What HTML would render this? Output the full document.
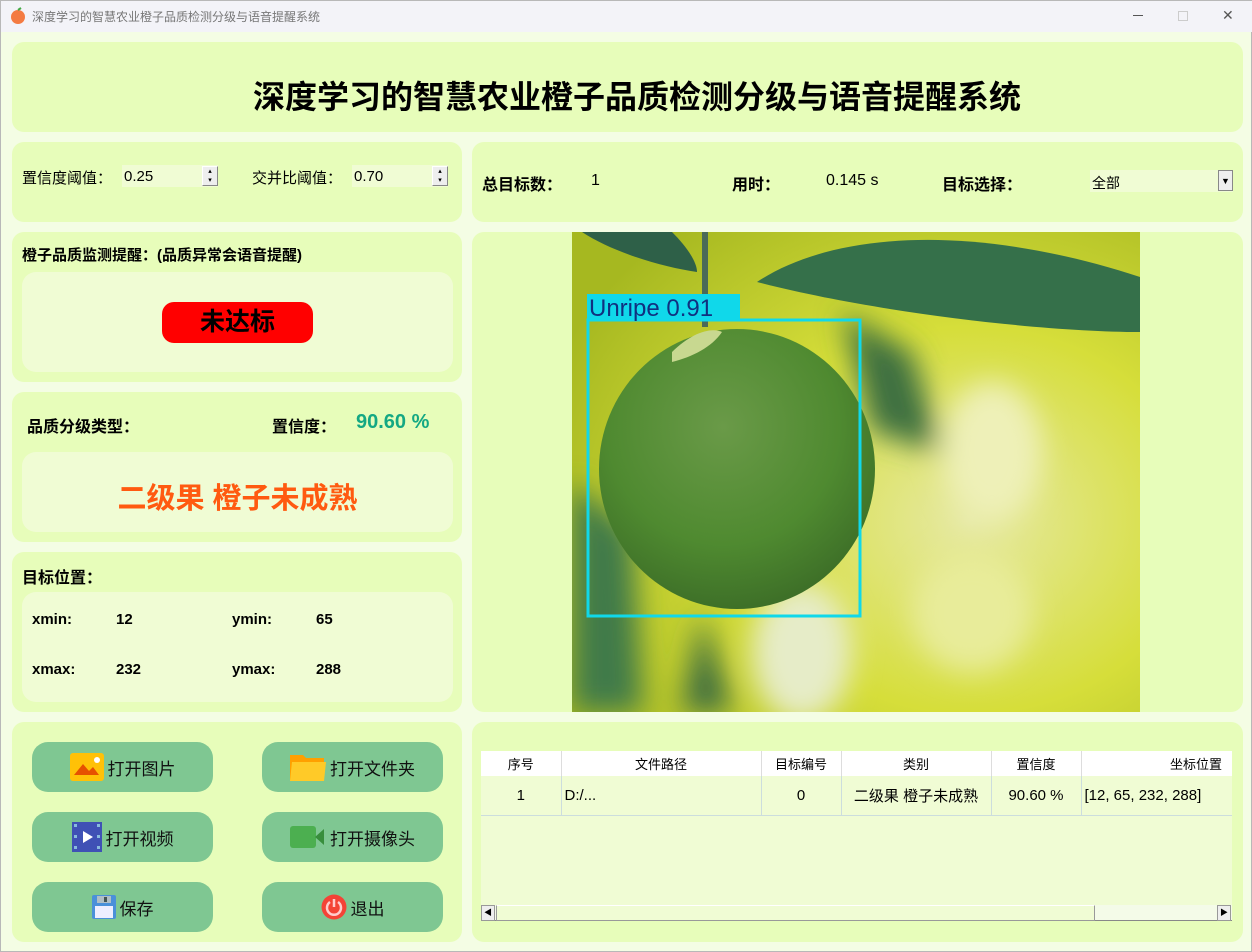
<!DOCTYPE html>
<html><head><meta charset="utf-8"><style>
*{margin:0;padding:0;box-sizing:border-box}
body{width:1252px;height:952px;background:#f4fde4;font-family:"Liberation Sans","Noto Sans CJK SC",sans-serif;position:relative;overflow:hidden;border:1px solid #b8b8b8}
.a{position:absolute}
.p{position:absolute;background:#e7fdba;border-radius:12px}
.in{position:absolute;background:#f0fcd4;border-radius:14px}
.b{font-weight:bold}
.btn{position:absolute;width:181px;height:50px;background:#7fc792;border-radius:16px;display:flex;align-items:center;justify-content:center;font-size:17px;color:#111}
.btn svg{margin-right:4px}
.spin{position:absolute;width:96px;height:22px;background:#f0fcd4;font-size:15px;padding:3px 0 0 2px}
.spin i{position:absolute;right:0;top:1px;width:16px;height:20px;border:1px solid #888;background:#eee;border-top-color:#fff;border-left-color:#fff;font-style:normal;font-size:7px;line-height:9px;text-align:center}
table{border-collapse:collapse;font-size:13px}
td{text-align:center}
</style></head><body>
<div class="a" style="left:0;top:0;width:1252px;height:31px;background:#f3f3f8"></div>
<svg class="a" style="left:9px;top:6px" width="16" height="18"><circle cx="8" cy="10" r="7" fill="#f47b42"/><path d="M8 3 L11 1" stroke="#4a4" stroke-width="2"/></svg>
<div class="a" style="left:31px;top:7px;font-size:12px;color:#777">深度学习的智慧农业橙子品质检测分级与语音提醒系统</div>
<div class="a" style="left:1132px;top:14px;width:10px;height:1px;background:#555"></div>
<div class="a" style="left:1177px;top:10px;width:10px;height:10px;border:1px solid #ccc"></div>
<div class="a" style="left:1221px;top:6px;font-size:14px;color:#555">✕</div>

<div class="p" style="left:11px;top:41px;width:1231px;height:90px"></div>
<div class="a b" style="left:0;width:1272px;top:71px;text-align:center;font-size:32px;color:#000">深度学习的智慧农业橙子品质检测分级与语音提醒系统</div>

<div class="p" style="left:11px;top:141px;width:450px;height:80px"></div>
<div class="a" style="left:21px;top:166px;font-size:15px">置信度阈值：</div>
<div class="spin" style="left:121px;top:164px">0.25<i>▴<br>▾</i></div>
<div class="a" style="left:251px;top:166px;font-size:15px">交并比阈值：</div>
<div class="spin" style="left:351px;top:164px">0.70<i>▴<br>▾</i></div>

<div class="p" style="left:471px;top:141px;width:771px;height:80px"></div>
<div class="a b" style="left:481px;top:170px;font-size:16px">总目标数：</div>
<div class="a" style="left:590px;top:171px;font-size:16px">1</div>
<div class="a b" style="left:731px;top:170px;font-size:16px">用时：</div>
<div class="a" style="left:825px;top:171px;font-size:16px">0.145 s</div>
<div class="a b" style="left:941px;top:170px;font-size:16px">目标选择：</div>
<div class="a" style="left:1089px;top:169px;width:143px;height:22px;background:#f0fcd4;font-size:14px;padding:3px 2px">全部<span style="position:absolute;right:0;top:0;width:15px;height:21px;border:1px solid #888;background:#eee;font-size:9px;text-align:center;line-height:20px">▼</span></div>

<div class="p" style="left:11px;top:231px;width:450px;height:150px"></div>
<div class="a b" style="left:21px;top:243px;font-size:15px">橙子品质监测提醒：(品质异常会语音提醒)</div>
<div class="in" style="left:21px;top:271px;width:431px;height:100px"></div>
<div class="a b" style="left:161px;top:301px;width:151px;height:41px;background:#f00;border-radius:12px;text-align:center;font-size:25px;line-height:41px">未达标</div>

<div class="p" style="left:11px;top:391px;width:450px;height:150px"></div>
<div class="a b" style="left:26px;top:412px;font-size:16px">品质分级类型：</div>
<div class="a b" style="left:271px;top:412px;font-size:16px">置信度：</div>
<div class="a b" style="left:355px;top:410px;font-size:20px;color:#14a883">90.60 %</div>
<div class="in" style="left:21px;top:451px;width:431px;height:80px"></div>
<div class="a b" style="left:21px;width:431px;top:474px;text-align:center;font-size:29px;color:#ff5a10">二级果 橙子未成熟</div>

<div class="p" style="left:11px;top:551px;width:450px;height:160px"></div>
<div class="a b" style="left:21px;top:563px;font-size:16px">目标位置：</div>
<div class="in" style="left:21px;top:591px;width:431px;height:110px"></div>
<div class="a b" style="left:31px;top:610px;font-size:15px">xmin:</div>
<div class="a b" style="left:115px;top:610px;font-size:15px">12</div>
<div class="a b" style="left:231px;top:610px;font-size:15px">ymin:</div>
<div class="a b" style="left:315px;top:610px;font-size:15px">65</div>
<div class="a b" style="left:31px;top:660px;font-size:15px">xmax:</div>
<div class="a b" style="left:115px;top:660px;font-size:15px">232</div>
<div class="a b" style="left:231px;top:660px;font-size:15px">ymax:</div>
<div class="a b" style="left:315px;top:660px;font-size:15px">288</div>

<div class="p" style="left:471px;top:231px;width:771px;height:480px"></div>
<svg class="a" style="left:571px;top:231px" width="568" height="480" viewBox="0 0 568 480">
<defs>
<radialGradient id="bg" cx="0.7" cy="0.6" r="0.8"><stop offset="0" stop-color="#e6e9a4"/><stop offset="0.5" stop-color="#d6de3a"/><stop offset="1" stop-color="#a6b820"/></radialGradient>
<radialGradient id="or" cx="0.45" cy="0.35" r="0.7"><stop offset="0" stop-color="#6a9a48"/><stop offset="0.6" stop-color="#4f8a30"/><stop offset="1" stop-color="#3a6a26"/></radialGradient>
<filter id="bl"><feGaussianBlur stdDeviation="14"/></filter>
</defs>
<rect width="568" height="480" fill="url(#bg)"/>
<g filter="url(#bl)">
<ellipse cx="420" cy="220" rx="50" ry="70" fill="#eef0b8"/>
<ellipse cx="400" cy="380" rx="60" ry="60" fill="#e8ec9a"/>
<ellipse cx="230" cy="420" rx="50" ry="70" fill="#e6ecc8"/>
<path d="M0 250 L60 300 L70 480 L0 480Z" fill="#3f7a4a"/>
<path d="M270 80 L340 120 L370 220 L300 200Z" fill="#3c7040"/>
<path d="M130 380 L160 480 L110 480Z" fill="#3a6a40"/>
</g>
<path d="M185 50 C260 0 400 -10 568 45 L568 100 C470 100 300 80 185 50Z" fill="#35704a"/>
<path d="M10 0 L100 0 C115 15 125 30 125 40 C90 35 40 20 10 0Z" fill="#2e6048"/>
<rect x="130" y="0" width="6" height="95" fill="#4a6a58"/>
<ellipse cx="165" cy="237" rx="138" ry="140" fill="url(#or)"/>
<path d="M100 120 C120 100 140 95 150 100 C140 115 120 125 100 130Z" fill="#c8d890"/>
<rect x="16" y="88" width="272" height="296" fill="none" stroke="#10d8ea" stroke-width="3"/>
<rect x="15" y="62" width="153" height="26" fill="#10d8ea"/>
<text x="17" y="84" font-family="Liberation Sans" font-size="24" fill="#103080">Unripe  0.91</text>
</svg>

<div class="p" style="left:11px;top:721px;width:450px;height:220px"></div>
<div class="btn" style="left:31px;top:741px"><svg width="34" height="28"><rect width="34" height="28" rx="3" fill="#ffc107"/><path d="M4 22 L13 11 L19 18 L23 14 L29 22Z" fill="#e65100"/><circle cx="27" cy="7" r="3" fill="#fff"/></svg>打开图片</div>
<div class="btn" style="left:261px;top:741px"><svg width="36" height="28"><path d="M0 2 h13 l3 3 h18 v23 h-34Z" fill="#ffa000"/><path d="M2 9 h34 l-2 19 h-34Z" fill="#ffca28"/></svg>打开文件夹</div>
<div class="btn" style="left:31px;top:811px"><svg width="30" height="30"><rect width="30" height="30" fill="#3f51b5"/><path d="M11 9 L21 15 L11 21Z" fill="#fff"/><g fill="#8bd" ><rect x="2" y="2" width="3" height="3"/><rect x="2" y="13" width="3" height="3"/><rect x="2" y="24" width="3" height="3"/><rect x="25" y="2" width="3" height="3"/><rect x="25" y="13" width="3" height="3"/><rect x="25" y="24" width="3" height="3"/></g></svg>打开视频</div>
<div class="btn" style="left:261px;top:811px"><svg width="36" height="22"><rect width="26" height="22" rx="3" fill="#4caf50"/><path d="M25 11 L34 3 L34 19Z" fill="#388e3c"/></svg>打开摄像头</div>
<div class="btn" style="left:31px;top:881px"><svg width="24" height="24"><rect width="24" height="24" rx="2" fill="#4a90d9"/><rect x="5" y="1" width="14" height="7" fill="#b0bec5"/><rect x="12" y="2" width="3" height="5" fill="#455"/><rect x="3" y="11" width="18" height="12" fill="#eef"/></svg>保存</div>
<div class="btn" style="left:261px;top:881px"><svg width="26" height="26"><circle cx="13" cy="13" r="12.5" fill="#f44336"/><path d="M9 8 A7 7 0 1 0 17 8" fill="none" stroke="#fcc" stroke-width="2.5"/><path d="M13 5 V13" stroke="#fcc" stroke-width="2.5"/></svg>退出</div>

<div class="p" style="left:471px;top:721px;width:771px;height:220px"></div>
<div class="a" style="left:480px;top:750px;width:751px;height:154px;background:#f0fcd4"></div>
<table class="a" style="left:480px;top:750px;width:751px">
<tr style="background:#fff;height:25px"><td style="width:80px;border-right:1px solid #ddd">序号</td><td style="width:200px;border-right:1px solid #ddd">文件路径</td><td style="width:80px;border-right:1px solid #ddd">目标编号</td><td style="width:150px;border-right:1px solid #ddd">类别</td><td style="width:90px;border-right:1px solid #ddd">置信度</td><td style="text-align:right;padding-right:10px">坐标位置</td></tr>
<tr style="height:39px;font-size:15px;border-bottom:1px solid #cdd"><td style="border-right:1px solid #cdd">1</td><td style="text-align:left;padding-left:3px;border-right:1px solid #cdd">D:/...</td><td style="border-right:1px solid #cdd">0</td><td style="border-right:1px solid #cdd">二级果 橙子未成熟</td><td style="border-right:1px solid #cdd">90.60 %</td><td style="text-align:left;padding-left:3px">[12, 65, 232, 288]</td></tr>
</table>
<div class="a" style="left:480px;top:904px;width:751px;height:16px;background:#f4fbe8;border-bottom:1px solid #888"></div>
<div class="a" style="left:480px;top:904px;width:14px;height:16px;background:#eee;border:1px solid #999;font-size:8px;text-align:center;line-height:14px">◀</div>
<div class="a" style="left:495px;top:904px;width:599px;height:16px;background:#f0fcd4;border:1px solid #999;border-top-color:#fff"></div>
<div class="a" style="left:1216px;top:904px;width:14px;height:16px;background:#eee;border:1px solid #999;font-size:8px;text-align:center;line-height:14px">▶</div>
</body></html>
